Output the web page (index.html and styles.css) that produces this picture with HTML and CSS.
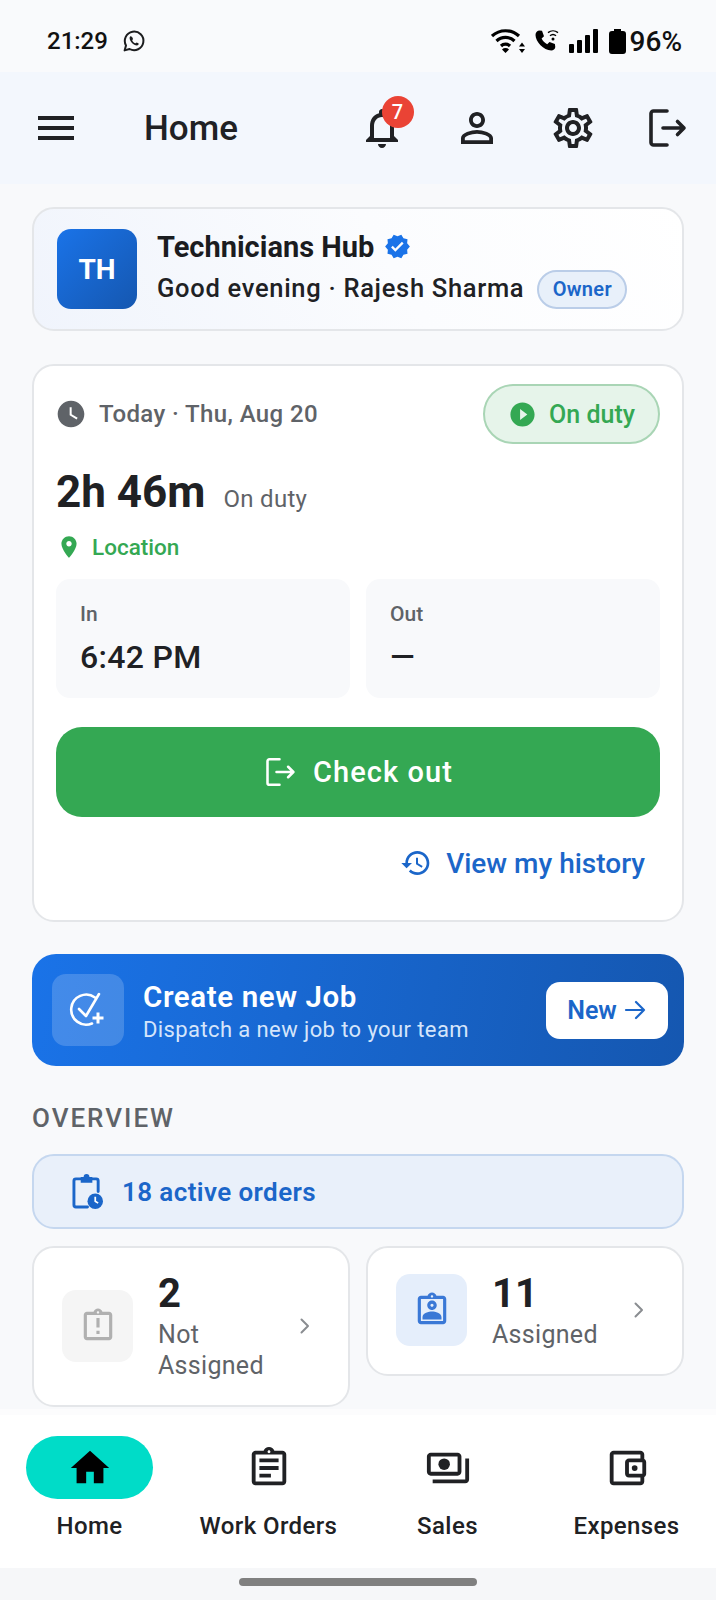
FILE: index.html
```html
<!DOCTYPE html>
<html lang="en">
<head>
<meta charset="utf-8">
<title>Home</title>
<link rel="stylesheet" href="styles.css">
</head>
<body>
<div class="phone">
  <header class="status">
    <div class="status-left">
      <span class="status-time">21:29</span>
      <svg class="ic-wa" viewBox="0 0 24 24"><path class="st-dark" d="M2.6 21.4l1.4-5A9.3 9.3 0 1 1 7.6 20z"/><path class="fl-dark" d="M8.8 7.2c-.5 0-1.2.6-1.2 1.8 0 3.2 4 7.4 7.3 7.4 1.2 0 1.9-.9 1.9-1.6 0-.4-1.8-1.4-2.2-1.4-.4 0-.8.8-1.2.8-1 0-3-1.9-3.2-3 0-.4.8-.7.8-1.2 0-.3-.7-2.8-2.2-2.8z"/></svg>
    </div>
    <div class="status-right">
      <svg class="ic-wifi" viewBox="0 0 34 24"><path class="st-wifi" d="M1 7a20 20 0 0 1 27 0M5.500 12a13 13 0 0 1 18 0M10 17a6.500 6.500 0 0 1 9 0"/><path class="fl-black" d="M14.500 24l-3.500-3.500a5 5 0 0 1 7 0zM31 13.500l3 4h-6zM31 24l-3-4h6z"/></svg>
      <svg class="ic-call" viewBox="0 0 25 24"><path class="fl-black" d="M5 1.5l3 .3 2 5.4-2.4 2.3c1.200 2.500 3 4.300 5.600 5.700l2.300-2.300 5.400 2 .4 3.100c-.2 2-2 3.500-4 3.500C9.600 21.500 1.500 12.500 1.500 6 1.500 3.500 3 1.800 5 1.500z"/><path class="st-wifi-sm" d="M14 3.600a8 8 0 0 1 10 0M16 6.800a4.500 4.500 0 0 1 6 0"/><circle class="fl-black" cx="19" cy="10" r="1.500"/></svg>
      <svg class="ic-signal" viewBox="0 0 30 24"><rect class="fl-black" x="0" y="15" width="5" height="9" rx="1"/><rect class="fl-black" x="8" y="11" width="5" height="13" rx="1"/><rect class="fl-black" x="16" y="6" width="5" height="18" rx="1"/><rect class="fl-black" x="24" y="0" width="5" height="24" rx="1"/></svg>
      <svg class="ic-batt" viewBox="0 0 17 25"><path class="fl-black" d="M5 0h7v2h2a3 3 0 0 1 3 3v17a3 3 0 0 1-3 3H3a3 3 0 0 1-3-3V5a3 3 0 0 1 3-3h2z"/></svg>
      <span class="status-pct">96%</span>
    </div>
  </header>

  <div class="appbar">
    <svg class="ic-48" viewBox="0 0 24 24"><path class="fl-ink" d="M3 18h18v-2H3v2zm0-5h18v-2H3v2zm0-7v2h18V6H3z"/></svg>
    <h1 class="appbar-title">Home</h1>
    <div class="appbar-actions">
      <div class="bell">
        <svg class="ic-48" viewBox="0 0 24 24"><path class="fl-ink" d="M12 22c1.100 0 2-.9 2-2h-4c0 1.100.89 2 2 2zm6-6v-5c0-3.070-1.640-5.640-4.500-6.320V4c0-.83-.67-1.500-1.500-1.500s-1.500.67-1.500 1.500v.68C7.630 5.360 6 7.920 6 11v5l-2 2v1h16v-1l-2-2zm-2 1H8v-6c0-2.480 1.510-4.500 4-4.500s4 2.020 4 4.500v6z"/></svg>
        <span class="badge">7</span>
      </div>
      <svg class="ic-48" viewBox="0 0 24 24"><path class="fl-ink" d="M12 5.900c1.160 0 2.100.94 2.100 2.100s-.94 2.100-2.100 2.100S9.900 9.160 9.900 8s.94-2.100 2.100-2.100m0 9c2.970 0 6.100 1.460 6.100 2.100v1.100H5.900V17c0-.64 3.130-2.100 6.100-2.100M12 4C9.790 4 8 5.790 8 8s1.790 4 4 4 4-1.790 4-4-1.790-4-4-4zm0 9c-2.670 0-8 1.340-8 4v3h16v-3c0-2.660-5.330-4-8-4z"/></svg>
      <svg class="ic-48" viewBox="0 0 24 24"><path class="fl-ink" d="M19.430 12.980c.04-.32.07-.64.07-.98 0-.34-.03-.66-.07-.98l2.110-1.650c.19-.15.24-.42.12-.64l-2-3.460c-.09-.16-.26-.25-.44-.25-.06 0-.12.01-.17.03l-2.490 1c-.52-.4-1.080-.73-1.690-.98l-.38-2.650C14.460 2.180 14.250 2 14 2h-4c-.25 0-.46.18-.49.42l-.38 2.650c-.61.25-1.170.59-1.690.98l-2.490-1c-.06-.02-.12-.03-.18-.03-.17 0-.34.09-.43.25l-2 3.460c-.13.22-.07.49.12.64l2.110 1.650c-.04.32-.07.65-.07.98 0 .33.03.66.07.98l-2.110 1.650c-.19.15-.24.42-.12.64l2 3.460c.09.16.26.25.44.25.06 0 .12-.01.17-.03l2.490-1c.52.4 1.080.73 1.690.98l.38 2.650c.03.24.24.42.49.42h4c.25 0 .46-.18.49-.42l.38-2.650c.61-.25 1.170-.59 1.690-.98l2.490 1c.06.02.12.03.18.03.17 0 .34-.09.43-.25l2-3.460c.12-.22.07-.49-.12-.64l-2.110-1.650zm-1.980-1.710c.04.31.05.52.05.73 0 .21-.02.43-.05.73l-.14 1.130.89.7 1.080.84-.7 1.210-1.270-.51-1.040-.42-.9.68c-.43.32-.84.56-1.250.73l-1.060.43-.16 1.130-.2 1.350h-1.400l-.19-1.350-.16-1.130-1.060-.43c-.43-.18-.83-.41-1.230-.71l-.91-.7-1.060.43-1.270.51-.7-1.210 1.080-.84.89-.7-.14-1.130c-.03-.31-.05-.54-.05-.74s.02-.43.05-.73l.14-1.130-.89-.7-1.080-.84.7-1.210 1.270.51 1.040.42.9-.68c.43-.32.84-.56 1.250-.73l1.060-.43.16-1.130.2-1.350h1.390l.19 1.350.16 1.130 1.060.43c.43.18.83.41 1.230.71l.91.7 1.060-.43 1.270-.51.7 1.210-1.070.85-.89.7.14 1.130zM12 8c-2.210 0-4 1.790-4 4s1.790 4 4 4 4-1.790 4-4-1.790-4-4-4zm0 6c-1.100 0-2-.9-2-2s.9-2 2-2 2 .9 2 2-.9 2-2 2z"/></svg>
      <svg class="ic-48" viewBox="0 0 48 48"><path class="st-logout" d="M23 7H9.500A2.500 2.500 0 0 0 7 9.500v29A2.500 2.500 0 0 0 9.500 41H23M19 24h21M33.500 17.500l6.500 6.500-6.500 6.500"/></svg>
    </div>
  </div>

  <main class="content">
    <section class="hello">
      <div class="avatar">TH</div>
      <div class="hello-text">
        <div class="hello-title">
          <span>Technicians Hub</span>
          <svg class="ic-verified" viewBox="0 0 24 24"><path class="fl-blue" d="M23 11.990l-2.440-2.790.34-3.690-3.610-.82-1.890-3.200L12 2.960 8.600 1.490 6.710 4.690 3.100 5.500l.34 3.700L1 11.990l2.440 2.790-.34 3.700 3.610.82 1.890 3.200 3.400-1.470 3.400 1.460 1.890-3.200 3.610-.82-.34-3.690L23 11.990zm-12.910 4.720l-3.800-3.810 1.480-1.480 2.320 2.330 5.850-5.870 1.480 1.480-7.330 7.350z"/></svg>
        </div>
        <div class="hello-sub">
          <span class="hello-greet">Good evening · Rajesh Sharma</span>
          <span class="owner">Owner</span>
        </div>
      </div>
    </section>

    <section class="duty">
      <div class="duty-head">
        <div class="duty-date">
          <svg class="ic-clock" viewBox="0 0 24 24"><path class="fl-grey" d="M12 2C6.500 2 2 6.500 2 12s4.500 10 10 10 10-4.500 10-10S17.500 2 12 2zm4.200 14.200L11 13V7h1.500v5.200l4.500 2.700-.8 1.300z"/></svg>
          <span>Today · Thu, Aug 20</span>
        </div>
        <div class="duty-pill">
          <svg class="ic-play" viewBox="0 0 24 24"><path class="fl-green" d="M12 2C6.480 2 2 6.480 2 12s4.480 10 10 10 10-4.480 10-10S17.520 2 12 2zm-2 14.500v-9l6 4.500-6 4.500z"/></svg>
          <span>On duty</span>
        </div>
      </div>
      <div class="duty-time"><strong>2h 46m</strong><span>On duty</span></div>
      <div class="duty-loc">
        <svg class="ic-pin" viewBox="0 0 24 24"><path class="fl-green" d="M12 2C8.130 2 5 5.130 5 9c0 5.250 7 13 7 13s7-7.750 7-13c0-3.870-3.130-7-7-7zm0 9.500c-1.380 0-2.500-1.120-2.500-2.500s1.120-2.500 2.500-2.500 2.500 1.120 2.500 2.500-1.120 2.500-2.500 2.500z"/></svg>
        <span>Location</span>
      </div>
      <div class="inout">
        <div class="inout-box"><div class="inout-label">In</div><div class="inout-value">6:42 PM</div></div>
        <div class="inout-box"><div class="inout-label">Out</div><div class="inout-value">—</div></div>
      </div>
      <div class="checkout">
        <svg class="ic-checkout" viewBox="0 0 48 48"><path class="st-logout-w" d="M22 7H8.500A2.500 2.500 0 0 0 6 9.500v29A2.500 2.500 0 0 0 8.500 41H22M18 24h22M33.500 17l7 7-7 7"/></svg>
        <span>Check out</span>
      </div>
      <div class="history">
        <svg class="ic-history" viewBox="0 0 24 24"><path class="fl-link" d="M13 3c-4.970 0-9 4.030-9 9H1l3.890 3.890.07.14L9 12H6c0-3.870 3.130-7 7-7s7 3.130 7 7-3.130 7-7 7c-1.930 0-3.680-.79-4.940-2.060l-1.420 1.420C8.270 19.990 10.510 21 13 21c4.970 0 9-4.030 9-9s-4.030-9-9-9zm-1 5v5l4.280 2.540.72-1.210-3.500-2.080V8H12z"/></svg>
        <span>View my history</span>
      </div>
    </section>

    <section class="banner">
      <div class="banner-icon">
        <svg class="ic-create" viewBox="0 0 40 40"><path class="st-white" d="M27 7.500A15 15 0 1 0 24 33.500M11 19l7 7L31 4"/><path class="st-white-b" d="M30 22.500v11M24.500 28h11"/></svg>
      </div>
      <div class="banner-text">
        <div class="banner-title">Create new Job</div>
        <div class="banner-sub">Dispatch a new job to your team</div>
      </div>
      <div class="banner-btn">
        <span>New</span>
        <svg class="ic-arrow" viewBox="0 0 24 24"><path class="st-link" d="M3 12h18M13 4l8 8-8 8"/></svg>
      </div>
    </section>

    <h2 class="overview">OVERVIEW</h2>

    <div class="active">
      <svg class="ic-orders" viewBox="0 0 32 36"><path class="st-link-b" d="M9 5H4a2 2 0 0 0-2 2v25a2 2 0 0 0 2 2h12M20 5h5a2 2 0 0 1 2 2v11"/><path class="fl-link" d="M9 3h3a3 3 0 0 1 6 0h3v6H9z"/><circle class="fl-link" cx="24" cy="28" r="8"/><path class="st-hands" d="M24 23.500V28l3 2"/></svg>
      <span>18 active orders</span>
    </div>

    <div class="tiles">
      <div class="tile">
        <div class="tile-icon tile-icon-grey">
          <svg class="ic-tile" viewBox="0 0 24 24"><path class="fl-muted" d="M11 15h2v2h-2zm0-8h2v6h-2zm8-4h-4.180C14.400 1.840 13.300 1 12 1c-1.300 0-2.400.84-2.820 2H5c-1.100 0-2 .9-2 2v14c0 1.100.9 2 2 2h14c1.100 0 2-.9 2-2V5c0-1.100-.9-2-2-2zm-7-.25c.41 0 .75.34.75.75s-.34.75-.75.75-.75-.34-.75-.75.34-.75.75-.75zM19 19H5V5h14v14z"/></svg>
        </div>
        <div class="tile-text"><div class="tile-num">2</div><div class="tile-label">Not Assigned</div></div>
        <svg class="ic-chev" viewBox="0 0 24 24"><path class="st-chev" d="M8.500 5.500l6.500 6.500-6.500 6.500"/></svg>
      </div>
      <div class="tile">
        <div class="tile-icon tile-icon-blue">
          <svg class="ic-tile" viewBox="0 0 24 24"><path class="fl-tileblue" d="M19 3h-4.180C14.400 1.840 13.300 1 12 1c-1.300 0-2.400.84-2.820 2H5c-1.100 0-2 .9-2 2v14c0 1.100.9 2 2 2h14c1.100 0 2-.9 2-2V5c0-1.100-.9-2-2-2zm-7-.25c.41 0 .75.34.75.75s-.34.75-.75.75-.75-.34-.75-.75.34-.75.75-.75zM19 19H5V5h14v14zM12 12c1.650 0 3-1.350 3-3s-1.350-3-3-3-3 1.350-3 3 1.350 3 3 3zm0-4c.55 0 1 .45 1 1s-.45 1-1 1-1-.45-1-1 .45-1 1-1zm-6 10h12v-1.500c0-2.500-4-3.500-6-3.500s-6 1-6 3.500z"/></svg>
        </div>
        <div class="tile-text"><div class="tile-num">11</div><div class="tile-label">Assigned</div></div>
        <svg class="ic-chev" viewBox="0 0 24 24"><path class="st-chev" d="M8.500 5.500l6.500 6.500-6.500 6.500"/></svg>
      </div>
    </div>
  </main>

  <nav class="nav">
    <div class="nav-item">
      <div class="nav-icon nav-icon-on">
        <svg class="ic-nav" viewBox="0 0 24 24"><path class="fl-black" d="M10 20v-6h4v6h5v-8h3L12 3 2 12h3v8z"/></svg>
      </div>
      <span class="nav-label">Home</span>
    </div>
    <div class="nav-item">
      <div class="nav-icon">
        <svg class="ic-nav" viewBox="0 0 24 24"><path class="fl-ink" d="M7 15h6v2H7zm0-4h10v2H7zm0-4h10v2H7zm12-4h-4.180C14.400 1.840 13.300 1 12 1c-1.300 0-2.400.84-2.820 2H5c-1.100 0-2 .9-2 2v14c0 1.100.9 2 2 2h14c1.100 0 2-.9 2-2V5c0-1.100-.9-2-2-2zm-7-.25c.41 0 .75.34.75.75s-.34.75-.75.75-.75-.34-.75-.75.34-.75.75-.75zM19 19H5V5h14v14z"/></svg>
      </div>
      <span class="nav-label">Work Orders</span>
    </div>
    <div class="nav-item">
      <div class="nav-icon">
        <svg class="ic-nav" viewBox="0 0 24 24"><path class="fl-ink" d="M19 14V6c0-1.100-.9-2-2-2H3c-1.100 0-2 .9-2 2v8c0 1.100.9 2 2 2h14c1.100 0 2-.9 2-2zm-2 0H3V6h14v8zM23 7v11c0 1.100-.9 2-2 2H4v-2h17V7h2z"/><circle class="fl-ink" cx="10" cy="10" r="3"/></svg>
      </div>
      <span class="nav-label">Sales</span>
    </div>
    <div class="nav-item">
      <div class="nav-icon">
        <svg class="ic-nav" viewBox="0 0 24 24"><path class="fl-ink" d="M21 7.280V5c0-1.100-.9-2-2-2H5c-1.110 0-2 .9-2 2v14c0 1.100.89 2 2 2h14c1.100 0 2-.9 2-2v-2.280c.59-.35 1-.98 1-1.720V9c0-.74-.41-1.370-1-1.720zM20 9v6h-7V9h7zM5 19V5h14v2h-6c-1.100 0-2 .9-2 2v6c0 1.100.9 2 2 2h6v2H5z"/><circle class="fl-ink" cx="16" cy="12" r="1.500"/></svg>
      </div>
      <span class="nav-label">Expenses</span>
    </div>
  </nav>

  <div class="gesture"><div class="gesture-bar"></div></div>
</div>
</body>
</html>
```

FILE: styles.css
```css
* { box-sizing: border-box; }
html, body { margin: 0; padding: 0; }
body { font-family: Roboto, "Noto Sans", sans-serif; color: #202124; background: #f8f9fb; }
svg { display: block; flex: none; }
h1, h2 { margin: 0; }

.phone { width: 716px; height: 1600px; display: flex; flex-direction: column; overflow: hidden; background: #f8f9fb; }

.status { height: 72px; flex: none; display: flex; align-items: center; justify-content: space-between; padding: 10px 34px 0 47px; background: #f9fafc; }
.status-left, .status-right { display: flex; align-items: center; }
.status-time { font-size: 24px; font-weight: 500; color: #111; }
.ic-wa { width: 24px; height: 24px; margin-left: 14px; }
.ic-wifi { width: 34px; height: 24px; }
.ic-call { width: 25px; height: 24px; margin-left: 9px; }
.ic-signal { width: 30px; height: 24px; margin-left: 10px; }
.ic-batt { width: 17px; height: 25px; margin-left: 10px; }
.status-pct { font-size: 28px; font-weight: 500; color: #111; margin-left: 4px; }

.fl-black { fill: #000; }
.fl-dark { fill: #1b1c1e; }
.fl-ink { fill: #202124; }
.fl-blue { fill: #1a73e8; }
.fl-grey { fill: #5f6368; }
.fl-green { fill: #34a853; }
.fl-link { fill: #1b66c9; }
.fl-muted { fill: #b0b0b0; }
.fl-tileblue { fill: #3a78d6; }
.st-dark { fill: none; stroke: #1b1c1e; stroke-width: 2; stroke-linejoin: round; }
.st-wifi { fill: none; stroke: #000; stroke-width: 3.200; }
.st-wifi-sm { fill: none; stroke: #000; stroke-width: 1.400; }
.st-logout { fill: none; stroke: #202124; stroke-width: 3.600; stroke-linecap: round; stroke-linejoin: round; }
.st-logout-w { fill: none; stroke: #fff; stroke-width: 3.400; stroke-linecap: round; stroke-linejoin: round; }
.st-white { fill: none; stroke: #fff; stroke-width: 2.600; stroke-linecap: round; stroke-linejoin: round; }
.st-white-b { fill: none; stroke: #fff; stroke-width: 3; }
.st-link { fill: none; stroke: #1b66c9; stroke-width: 2.200; stroke-linecap: round; stroke-linejoin: round; }
.st-link-b { fill: none; stroke: #1b66c9; stroke-width: 3; stroke-linecap: round; stroke-linejoin: round; }
.st-hands { fill: none; stroke: #fff; stroke-width: 1.800; }
.st-chev { fill: none; stroke: #8a8d91; stroke-width: 2; stroke-linecap: round; stroke-linejoin: round; }

.appbar { height: 112px; flex: none; display: flex; align-items: center; padding: 0 24px 0 32px; background: #f3f7fd; }
.ic-48 { width: 48px; height: 48px; }
.appbar-title { font-size: 35px; font-weight: 500; margin-left: 64px; padding-top: 2px; color: #202124; line-height: 44px; }
.appbar-actions { margin-left: auto; display: flex; align-items: center; gap: 47.500px; }
.bell { position: relative; width: 48px; height: 48px; }
.badge { position: absolute; left: 24px; top: -8px; width: 32px; height: 32px; border-radius: 50%; background: #ea4335; color: #fff; font-size: 20px; font-weight: 500; display: flex; align-items: center; justify-content: center; }

.content { flex: 1; min-height: 0; overflow: hidden; padding: 23px 32px 0; display: flex; flex-direction: column; }

.hello { height: 124px; flex: none; display: flex; align-items: center; gap: 20px; padding: 0 23px; border: 2px solid #e4e6e9; border-radius: 22px; background: linear-gradient(60deg, #f0f4fc 0%, #fbfcfe 55%, #ffffff 100%); }
.avatar { width: 80px; height: 80px; flex: none; border-radius: 14px; background: linear-gradient(135deg, #1a73e8, #1557b0); color: #fff; font-size: 28px; font-weight: 700; display: flex; align-items: center; justify-content: center; }
.hello-text { display: flex; flex-direction: column; gap: 5px; }
.hello-title { display: flex; align-items: center; gap: 10px; font-size: 29px; font-weight: 700; line-height: 36px; margin-top: -1px; color: #1b1c1f; }
.ic-verified { width: 27px; height: 27px; }
.hello-sub { display: flex; align-items: center; gap: 13px; font-size: 25.500px; font-weight: 500; letter-spacing: .7px; color: #202124; }
.hello-greet { margin-top: -3px; }
.owner { display: flex; align-items: center; justify-content: center; width: 90px; height: 39px; border-radius: 20px; background: #e8f0fa; border: 2px solid #bacde8; color: #1b66c9; font-size: 20px; font-weight: 600; letter-spacing: .3px; }

.duty { margin-top: 33px; height: 558px; flex: none; padding: 18px 22px 0; border: 2px solid #e4e6e9; border-radius: 22px; background: #fff; display: flex; flex-direction: column; }
.duty-head { height: 60px; flex: none; display: flex; align-items: center; justify-content: space-between; }
.duty-date { display: flex; align-items: center; gap: 12px; font-size: 24px; font-weight: 500; letter-spacing: .4px; color: #5f6368; }
.ic-clock { width: 32px; height: 32px; margin-left: -1px; }
.duty-pill { width: 177px; height: 60px; display: flex; align-items: center; justify-content: center; gap: 12px; border-radius: 30px; border: 2px solid #a9d5b5; background: #e6f4ea; color: #34a853; font-size: 25px; font-weight: 500; }
.ic-play { width: 29px; height: 29px; }
.duty-time { margin-top: 22px; height: 52px; display: flex; align-items: baseline; gap: 18px; line-height: 52px; }
.duty-time strong { font-size: 44px; font-weight: 700; color: #202124; }
.duty-time span { font-size: 24px; font-weight: 400; letter-spacing: .3px; color: #5f6368; }
.duty-loc { margin-top: 14px; height: 30px; display: flex; align-items: center; gap: 10px; color: #34a853; font-size: 22.500px; font-weight: 500; }
.ic-pin { width: 26px; height: 26px; }
.inout { margin-top: 17px; display: flex; gap: 16px; flex: none; }
.inout-box { flex: 1; height: 119px; padding: 22px 24px 0; border-radius: 14px; background: #f8f9fb; }
.inout-label { font-size: 21px; font-weight: 500; line-height: 26px; color: #5f6368; }
.inout-value { margin-top: 10px; font-size: 32px; font-weight: 500; line-height: 40px; letter-spacing: .3px; color: #202124; }
.checkout { margin-top: 29px; height: 90px; flex: none; display: flex; align-items: center; justify-content: center; gap: 14px; border-radius: 26px; background: #34a853; color: #fff; font-size: 29px; font-weight: 500; letter-spacing: 1.100px; }
.ic-checkout { width: 36px; height: 36px; }
.history { margin-top: 28px; height: 36px; display: flex; align-items: center; justify-content: flex-end; gap: 14px; padding-right: 15px; color: #1b66c9; font-size: 28px; font-weight: 500; }
.ic-history { width: 32px; height: 32px; }

.banner { margin-top: 32px; height: 112px; flex: none; display: flex; align-items: center; gap: 19px; padding: 0 16px 0 20px; border-radius: 24px; background: linear-gradient(100deg, #1a73e8, #1557b0); color: #fff; }
.banner-icon { width: 72px; height: 72px; flex: none; border-radius: 14px; background: rgba(255,255,255,.18); display: flex; align-items: center; justify-content: center; }
.ic-create { width: 40px; height: 40px; }
.banner-text { flex: 1; display: flex; flex-direction: column; padding-top: 3px; }
.banner-title { font-size: 29.500px; font-weight: 600; line-height: 36px; letter-spacing: .6px; }
.banner-sub { font-size: 22px; font-weight: 400; line-height: 30px; letter-spacing: .4px; color: #d5e5fb; }
.banner-btn { width: 122px; height: 57px; flex: none; display: flex; align-items: center; justify-content: center; gap: 6px; border-radius: 14px; background: #fff; color: #1b66c9; font-size: 25px; font-weight: 600; }
.ic-arrow { width: 24px; height: 24px; }

.overview { margin-top: 36px; font-size: 26px; font-weight: 500; line-height: 32px; letter-spacing: 2px; color: #5f6368; }

.active { margin-top: 20px; height: 75px; flex: none; display: flex; align-items: center; gap: 19px; padding-left: 38px; border: 2px solid #c5d7ef; border-radius: 22px; background: #e9f0fa; color: #1b66c9; font-size: 26px; font-weight: 600; letter-spacing: .4px; }
.ic-orders { width: 31px; height: 35px; }

.tiles { margin-top: 17px; display: flex; align-items: flex-start; gap: 16px; }
.tile { flex: 1; min-width: 0; display: flex; align-items: center; gap: 25px; padding: 22px 31px 24px 28px; border: 2px solid #e4e6e9; border-radius: 22px; background: #fff; }
.tile-icon { width: 71px; height: 72px; flex: none; border-radius: 14px; display: flex; align-items: center; justify-content: center; }
.tile-icon-grey { background: #f5f5f5; }
.tile-icon-blue { background: #e5eefb; }
.ic-tile { width: 38px; height: 38px; }
.tile-text { flex: 1; min-width: 0; }
.tile-num { font-size: 40px; font-weight: 700; line-height: 48px; margin-bottom: 1px; color: #202124; }
.tile-label { font-size: 25px; font-weight: 400; line-height: 31px; letter-spacing: .3px; color: #5f6368; }
.ic-chev { width: 24px; height: 24px; }

.nav { height: 159px; flex: none; border-top: 6px solid #fcfcfd; background: #fff; display: grid; grid-template-columns: repeat(4, 179px); padding-top: 21px; }
.nav-item { display: flex; flex-direction: column; align-items: center; }
.nav-icon { width: 127px; height: 63px; display: flex; align-items: center; justify-content: center; border-radius: 32px; }
.nav-icon-on { background: #00dcc8; }
.ic-nav { width: 46px; height: 46px; }
.nav-label { margin-top: 12px; font-size: 24px; font-weight: 500; line-height: 30px; letter-spacing: .4px; color: #202124; }

.gesture { height: 32px; flex: none; display: flex; justify-content: center; padding-top: 10px; background: #f6f7f9; }
.gesture-bar { width: 238px; height: 8px; border-radius: 4px; background: #808080; }
```
